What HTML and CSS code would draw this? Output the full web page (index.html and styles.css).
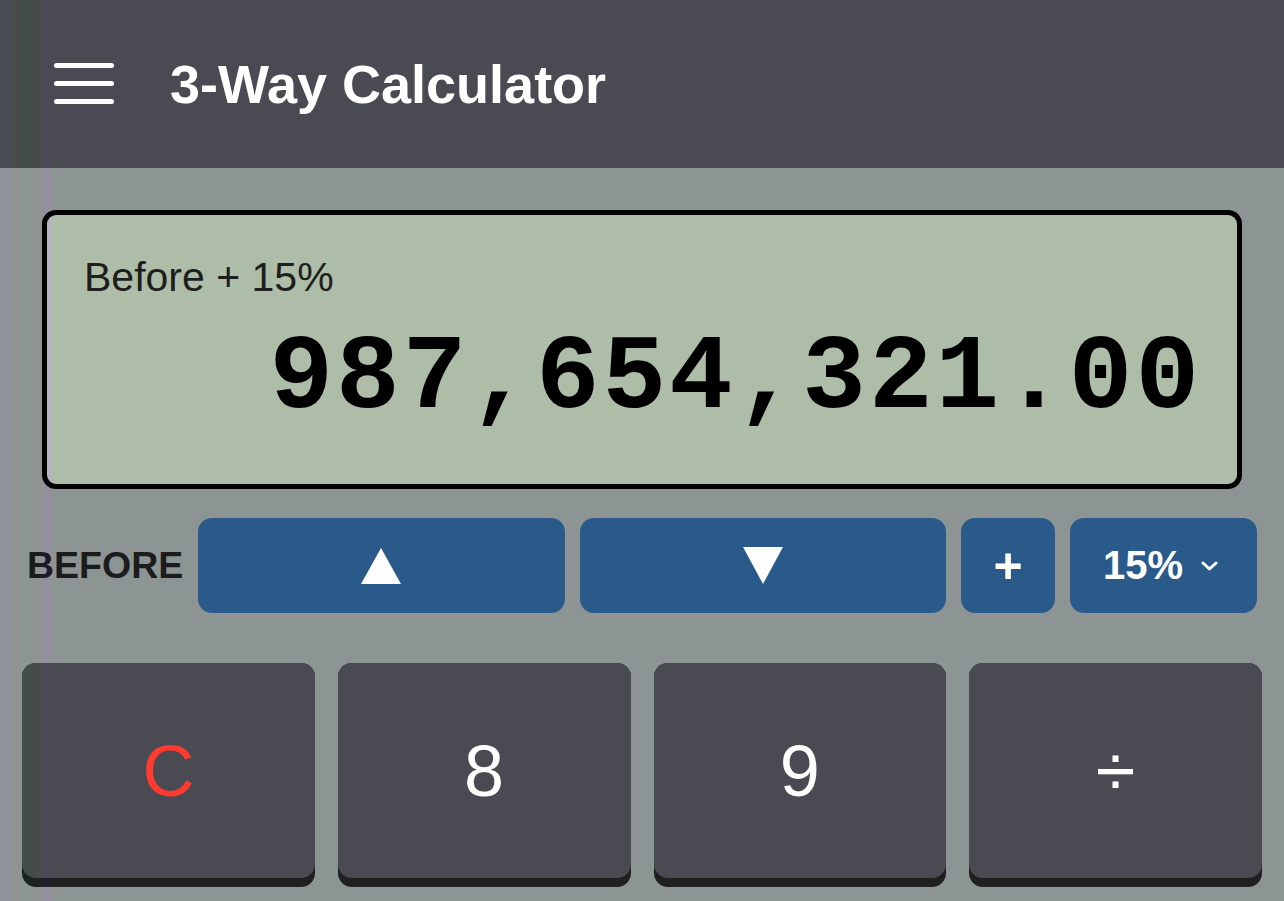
FILE: index.html
```
<!DOCTYPE html>
<html lang="en">
<head>
    <meta charset="UTF-8">
    <meta name="viewport" content="width=device-width, initial-scale=1.0">
    <title>3-Way Calculator</title>
    <link rel="stylesheet" href="styles.css">
</head>
<body>
    <header class="top-bar">
        <button class="menu-button" aria-label="Menu">
            <svg width="60" height="44" viewBox="0 0 60 44">
                <line x1="2.5" y1="4.5" x2="57.5" y2="4.5" />
                <line x1="2.5" y1="22.5" x2="57.5" y2="22.5" />
                <line x1="2.5" y1="40.5" x2="57.5" y2="40.5" />
            </svg>
        </button>
        <h1 class="app-title">3-Way Calculator</h1>
    </header>

    <main class="calculator">
        <div class="display">
            <div class="display-label">Before + 15%</div>
            <div class="display-value">987,654,321.00</div>
        </div>

        <div class="mode-row">
            <div class="mode-label">BEFORE</div>
            <button class="mode-button wide" aria-label="Up">
                <svg width="40" height="36" viewBox="0 0 40 36"><polygon points="20,0 40,36 0,36" /></svg>
            </button>
            <button class="mode-button wide" aria-label="Down">
                <svg width="40" height="37" viewBox="0 0 40 37"><polygon points="0,0 40,0 20,37" /></svg>
            </button>
            <button class="mode-button plus">+</button>
            <button class="mode-button percent">
                15%
                <svg class="chevron" width="17" height="10" viewBox="0 0 17 10"><polyline points="2,2 8.5,8 15,2" /></svg>
            </button>
        </div>

        <div class="keys">
            <button class="key"><span class="key-face clear">C</span></button>
            <button class="key"><span class="key-face">8</span></button>
            <button class="key"><span class="key-face">9</span></button>
            <button class="key"><span class="key-face">÷</span></button>
        </div>
    </main>

    <div class="edge-shade"></div>
</body>
</html>
```

FILE: styles.css
```
body {
    margin: 0;
    background-color: #8c9593;
    font-family: "Liberation Sans", Arial, sans-serif;
}
button {
    font-family: inherit;
    border: none;
    cursor: pointer;
    padding: 0;
}
.top-bar {
    height: 168px;
    background-color: #4a4a52;
    display: flex;
    align-items: center;
    gap: 56px;
    padding-left: 54px;
    box-sizing: border-box;
}
.menu-button {
    background: none;
    display: flex;
    margin-top: -2px;
}
.menu-button line {
    stroke: #ffffff;
    stroke-width: 5;
    stroke-linecap: round;
}
.app-title {
    margin: 0;
    color: #ffffff;
    font-size: 54px;
    font-weight: bold;
}
.display {
    margin: 42px 42px 0;
    background-color: #adbda8;
    border: 5px solid #000000;
    border-radius: 14px;
    padding: 39px 35px 48px 37px;
}
.display-label {
    font-size: 41px;
    line-height: 46px;
    color: #1e1e1e;
}
.display-value {
    margin-top: 22px;
    font-family: "Liberation Mono", "Courier New", monospace;
    font-weight: bold;
    font-size: 106px;
    letter-spacing: 3px;
    line-height: 114px;
    text-align: right;
    color: #000000;
}
.mode-row {
    display: flex;
    align-items: center;
    gap: 15px;
    margin: 29px 27px 0;
    height: 95px;
}
.mode-label {
    font-size: 37.5px;
    font-weight: bold;
    color: #1c1c1c;
}
.mode-button {
    height: 95px;
    background-color: #295a8a;
    border-radius: 14px;
    color: #ffffff;
    display: flex;
    align-items: center;
    justify-content: center;
}
.mode-button svg polygon {
    fill: #ffffff;
}
.wide {
    flex: 1;
}
.plus {
    width: 94px;
    font-size: 50px;
    font-weight: bold;
}
.percent {
    width: 187px;
    font-size: 40px;
    font-weight: bold;
    gap: 18px;
    padding-right: 6px;
}
.chevron polyline {
    fill: none;
    stroke: #ffffff;
    stroke-width: 3;
    stroke-linecap: round;
    stroke-linejoin: round;
}
.keys {
    display: grid;
    grid-template-columns: repeat(4, 1fr);
    gap: 23px;
    margin: 50px 22px 20px;
}
.key {
    background-color: #202020;
    border-radius: 14px;
    padding-bottom: 9px;
    display: block;
}
.key-face {
    height: 215px;
    display: flex;
    align-items: center;
    justify-content: center;
    background-color: #4a4a52;
    border-radius: 14px;
    color: #ffffff;
    font-size: 72px;
}
.key-face.clear {
    color: #ff3b30;
}
.edge-shade {
    position: fixed;
    left: 0;
    top: 0;
    width: 52px;
    height: 100%;
    pointer-events: none;
    mix-blend-mode: color;
    background: linear-gradient(to right,
        #80858c 0 12px,
        #888888 12px 20px,
        #7f8a88 20px 34px,
        #888888 34px 42px,
        #8c8a94 42px 52px);
}
```
